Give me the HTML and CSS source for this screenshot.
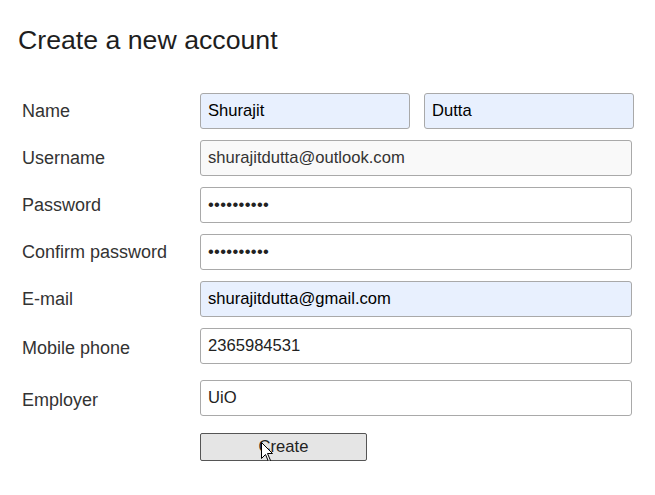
FILE: index.html
```html
<!DOCTYPE html>
<html>
<head>
<meta charset="utf-8">
<link rel="stylesheet" href="styles.css">
</head>
<body>
<h1 class="title">Create a new account</h1>
<form class="form">
  <label class="label">Name</label>
  <div class="pair">
    <input class="field autofill" type="text" value="Shurajit">
    <input class="field autofill" type="text" value="Dutta">
  </div>
  <label class="label">Username</label>
  <input class="field field-wide readonly" type="text" value="shurajitdutta@outlook.com" readonly>
  <label class="label">Password</label>
  <input class="field field-wide" type="password" value="abcdefghij">
  <label class="label">Confirm password</label>
  <input class="field field-wide" type="password" value="abcdefghij">
  <label class="label">E-mail</label>
  <input class="field field-wide autofill" type="text" value="shurajitdutta@gmail.com">
  <label class="label label-low">Mobile phone</label>
  <input class="field field-wide" type="text" value="2365984531">
  <label class="label label-low row-gap">Employer</label>
  <input class="field field-wide row-gap" type="text" value="UiO">
  <span></span>
  <div class="actions">
    <button class="button" type="button">Create</button>
    <svg class="cursor" width="13" height="21" viewBox="0 0 13 21">
      <path d="M0.5 0.5 L0.5 16.5 L4.5 12.5 L7.5 19.5 L9.5 18.5 L6.5 11.5 L11.5 11.5 Z" fill="#fff" stroke="#000" stroke-width="1" stroke-linejoin="miter"/>
    </svg>
  </div>
</form>
</body>
</html>
```
FILE: styles.css
```css
html, body {
  margin: 0;
  padding: 0;
  background: #ffffff;
}
body {
  padding: 0 18px;
  font-family: "Liberation Sans", Arial, sans-serif;
  color: #222;
}
.title {
  margin: 25px 0 0 0;
  font-size: 26.7px;
  font-weight: normal;
  line-height: 30px;
  color: #1e1e1e;
}
.form {
  display: grid;
  grid-template-columns: 178px 434px;
  column-gap: 0;
  row-gap: 11px;
  margin: 38px 0 0 4px;
  align-items: center;
}
.label {
  font-size: 18px;
  color: #333;
}
.label-low {
  padding-top: 4px;
}
.row-gap {
  margin-top: 5px;
}
.pair {
  display: flex;
  gap: 14px;
}
.field {
  box-sizing: border-box;
  height: 36px;
  border: 1px solid #a9a9a9;
  border-radius: 3px;
  padding: 0 7px;
  font-family: "Liberation Sans", Arial, sans-serif;
  font-size: 16.6px;
  color: #222;
  background: #fff;
  outline: none;
}
.pair .field {
  width: 210px;
}
.field-wide {
  width: 432px;
}
.autofill {
  background: #e8f0fe;
  color: #000;
}
.readonly {
  background: #f9f9f9;
  color: #333;
}
input[type="password"] {
  letter-spacing: 0.3px;
  color: #222;
}
.actions {
  position: relative;
  margin-top: 6px;
}
.button {
  box-sizing: border-box;
  width: 167px;
  height: 28px;
  background: #e5e5e5;
  border: 1px solid #555;
  border-radius: 2px;
  font-family: "Liberation Sans", Arial, sans-serif;
  font-size: 16.6px;
  color: #222;
  padding: 0;
}
.cursor {
  position: absolute;
  left: 61px;
  top: 9px;
}
```
